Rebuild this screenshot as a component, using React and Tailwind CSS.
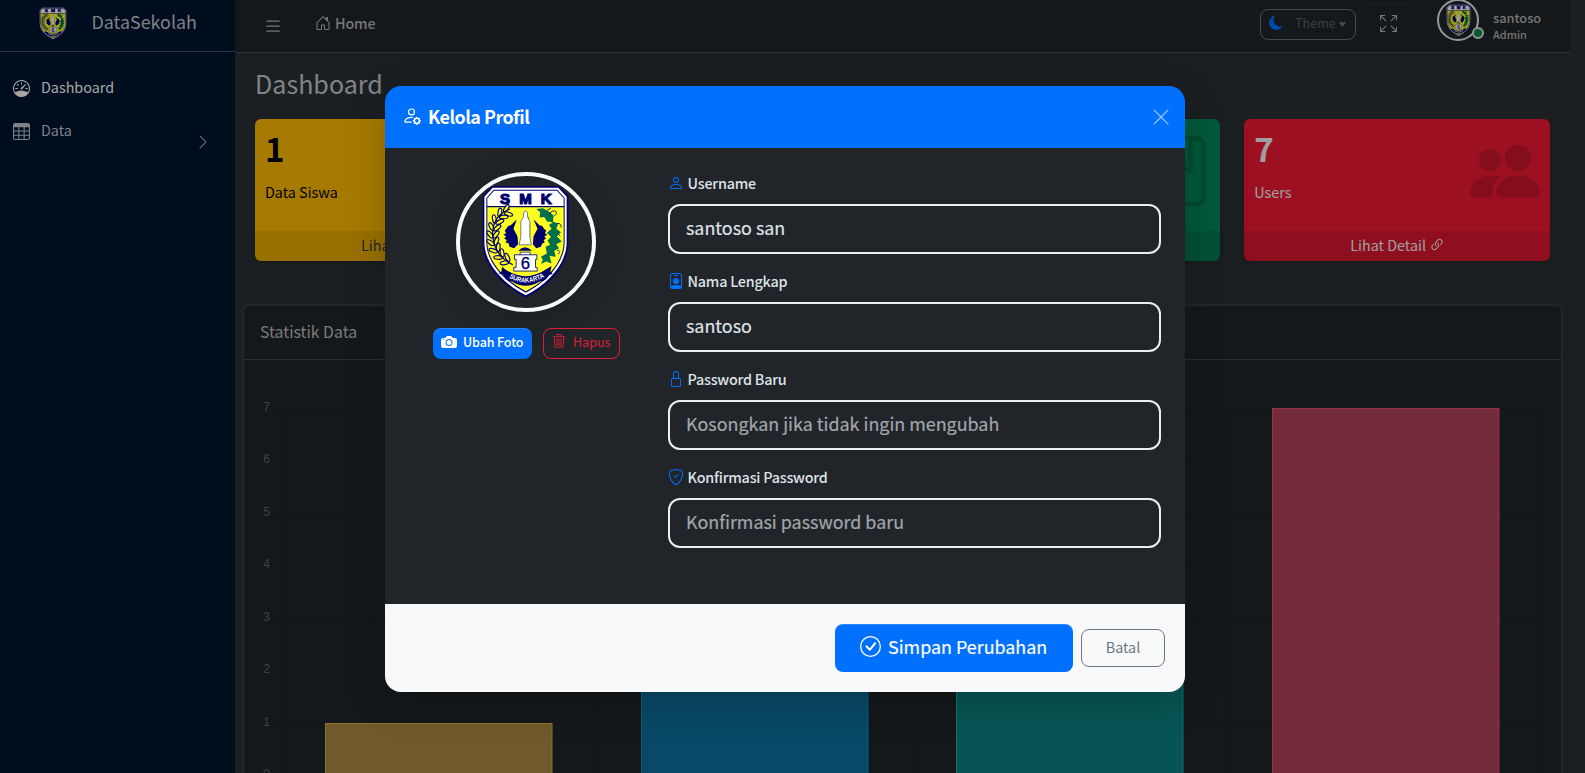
import {
  BsSpeedometer, BsTable, BsChevronRight, BsList, BsHouseDoor, BsMoonFill, BsCaretDownFill,
  BsArrowsFullscreen, BsJournalBookmark, BsPeopleFill, BsLink45Deg, BsPersonGear, BsXLg,
  BsCameraFill, BsTrash3, BsPerson, BsPersonBadge, BsLock, BsShieldCheck, BsCheckCircle,
} from "react-icons/bs";

const NAVY = "#00006b";

const leaves = [
  [140, 140, 20], [124, 152, 40], [111, 170, 62], [104, 191, 78], [101, 213, 90],
  [103, 235, 104], [111, 256, 122], [125, 274, 138], [143, 288, 152],
];

function Crest({ className, id }) {
  return (
    <svg className={className} viewBox="68 60 260 340" preserveAspectRatio="none" aria-hidden="true">
      <path d="M98 63H298L326 92V232C326 300 272 362 199 398C126 362 70 300 70 232V92Z" fill={NAVY} />
      <path d="M100 68H296L321 95V232C321 296 268 356 199 392C130 356 75 296 75 232V95Z" fill="#fff" />
      <path d="M103 74H293L315 99V232C315 292 264 350 199 384C134 350 81 292 81 232V99Z" fill={NAVY} />
      <path d="M104 77H292L312 100V123H84V100Z" fill="#fff" />
      <path d="M84 127H312V232C312 290 262 347 199 380C136 347 84 290 84 232Z" fill="#ffff21" />
      <g fontSize="45" fontWeight="700" textAnchor="middle" fill={NAVY} stroke={NAVY} strokeWidth="3.5" fontFamily="Liberation Sans, sans-serif">
        <text x="199" y="116" textLength="154" lengthAdjust="spacing">SMK</text>
      </g>
      <g fill="#ffff21" stroke={NAVY} strokeWidth="3.5">
        {leaves.map(([x, y, a]) => (
          <g key={y} transform={`translate(${x} ${y}) rotate(${180 - a})`}>
            <ellipse cx="-4" cy="-9" rx="13" ry="5.5" transform="rotate(38 -4 -9)" />
            <ellipse cx="-4" cy="9" rx="13" ry="5.5" transform="rotate(-38 -4 9)" />
          </g>
        ))}
      </g>
      <path d="M152 132C108 148 96 184 101 220C106 262 132 286 160 300" fill="none" stroke={NAVY} strokeWidth="3.5" />
      <path d="M230 132L250 130L268 140L282 152L280 170L296 176L290 192L304 202L292 214L306 230L290 238L298 250L284 258L288 276L270 274L276 296L260 290L244 298L250 284L244 276L262 266L258 246L272 240L264 228L274 216L262 204L276 192L268 180L280 172L262 170L254 156L240 158L242 142Z" fill="#00704a" />
      <path d="M270 148Q276 134 286 138T284 154M292 176Q306 174 304 188M294 206L302 214M292 256Q306 258 296 268M262 136L274 130" fill="none" stroke={NAVY} strokeWidth="2.5" />
      <path d="M172 164C158 176 152 186 148 182C142 186 142 194 136 196L140 206L132 208L140 216L134 220L142 226L138 232L148 236L150 246L164 250L176 238L174 214L162 192Z" fill={NAVY} />
      <path d="M222 164C236 176 242 186 246 182C252 186 252 194 260 196L256 206L264 208L254 216L260 220L252 226L256 232L248 236L244 246L230 250L220 238L222 214L234 192Z" fill={NAVY} />
      <path d="M206 150L212 180V238H202Z" fill="#8a8a50" />
      <path d="M192 144Q197 132 204 144V156L211 170V216L215 240H179L184 216V170L192 156Z" fill="#fff" stroke={NAVY} strokeWidth="1.5" />
      <path d="M176 258Q196 236 218 258Z" fill={NAVY} />
      <path d="M182 262H212V272H182Z" fill="#fff" stroke={NAVY} strokeWidth="2" />
      <path d="M165 270H232V284H228V308H233V319H163V308H170V284H165Z" fill="#fff" stroke={NAVY} strokeWidth="2.5" />
      <text x="198" y="313" textAnchor="middle" fontSize="50" fill={NAVY} stroke={NAVY} strokeWidth="1" fontFamily="Liberation Sans, sans-serif">6</text>
      <path d="M128 306L138 314Q198 356 262 312L276 304L272 320L280 328L268 330Q260 350 240 350Q198 376 158 350Q138 350 132 330L118 326L126 320Z" fill={NAVY} />
      <path id={id} d="M142 334Q198 374 262 332" fill="none" />
      <text fontSize="21" fontWeight="700" fill="#fff" fontFamily="Liberation Sans, sans-serif">
        <textPath href={"#" + id} startOffset="50%" textAnchor="middle" textLength="112" lengthAdjust="spacingAndGlyphs">SURAKARTA</textPath>
      </text>
    </svg>
  );
}

function Sidebar() {
  return (
    <aside className="flex h-full w-[235px] shrink-0 flex-col bg-[#001530]">
      <div className="flex h-[52px] items-start border-b border-[#4a5560] pl-[39px]">
        <Crest id="crest-brand" className="mt-[7px] h-[33px] w-[28px]" />
        <span className="ml-[24.5px] mt-[9px] text-[17.9px] leading-[25px] text-[#c3c8cd]">DataSekolah</span>
      </div>
      <nav className="flex flex-col pt-[15px] pl-[13px] text-[14.35px] text-[#c2c7d0]">
        <a className="flex h-[43px] items-center text-white">
          <BsSpeedometer className="mb-px size-[17px]" />
          <span className="ml-[11px] pb-[3px] leading-5">Dashboard</span>
        </a>
        <a className="flex h-[43px] items-center">
          <BsTable className="mb-px size-[17px]" />
          <span className="ml-[11px] pb-[3px] leading-5">Data</span>
          <BsChevronRight className="ml-auto mr-[24px] mt-[21px] size-[16px]" />
        </a>
      </nav>
    </aside>
  );
}

function Topbar() {
  return (
    <header className="mr-[15px] flex h-[53px] shrink-0 items-start border-b border-[#495057] bg-[#212529] text-[#b3b5b8]">
      <BsList className="ml-[28px] mt-4 size-5" />
      <a className="ml-[32px] flex items-center pt-[13px]">
        <BsHouseDoor className="mb-px size-4" />
        <span className="ml-[4px] text-[14.35px] font-medium leading-5 tracking-[-0.2px]">Home</span>
      </a>
      <button className="ml-auto mt-[9px] flex h-[31px] w-[96px] items-center rounded-lg border border-[#6c757d] pl-[8px] text-[12.6px] text-[#5c6369]">
        <BsMoonFill className="mb-[3px] size-[14px] text-[#0070ff]" />
        <span className="ml-[12px] pb-[3px] leading-5">Theme</span>
        <BsCaretDownFill className="mb-px ml-[2px] size-[9px] text-[#70777d]" />
      </button>
      <button className="ml-2 mt-1 flex h-[44px] w-[48px] justify-center rounded-lg border-t border-[#30353a] pt-[10px]">
        <BsArrowsFullscreen className="ml-px size-[17px]" />
      </button>
      <div className="relative -mt-px ml-[25px] size-[42px]">
        <span className="flex size-[42px] items-center justify-center rounded-full border-2 border-[#e9ecef]">
          <Crest id="crest-user" className="mt-px h-[33px] w-[25px]" />
        </span>
        <i className="absolute bottom-[2px] -right-[5px] size-3 rounded-full border-2 border-[#dee2e6] bg-[#0a8a44]" />
      </div>
      <div className="ml-[14px] flex w-[77px] flex-col pt-[9px]">
        <span className="text-[12.8px] font-medium leading-[18px]">santoso</span>
        <span className="text-[10.9px] font-medium leading-[15px]">Admin</span>
      </div>
    </header>
  );
}

function StatCard({ value, label, Icon, tone, children }) {
  return (
    <div className={"relative flex h-[142px] flex-1 flex-col overflow-hidden rounded-md shadow-[0_1px_3px_rgba(0,0,0,.25)] " + tone}>
      <div className="flex flex-1 items-start justify-between pl-[10px] pr-[10px]">
        <div className="flex flex-col pt-[9px]">
          <b className="text-[33px] leading-[41px]">{value}</b>
          <span className="mt-[13px] text-[14.35px] leading-5">{label}</span>
        </div>
        {Icon && <Icon className="mt-[17px] size-[70px] text-black/15" />}
      </div>
      <div className="flex h-[30px] items-center justify-center bg-black/[.08] pb-[3px] pl-px text-[14.35px]">{children}</div>
    </div>
  );
}

const bars = [
  { x: 81.5, v: 1, fill: "#ac8a42", line: "#d9ae4a" },
  { x: 397.5, v: 3, fill: "#0d719f", line: "#0f8fc4" },
  { x: 712.5, v: 4, fill: "#0c8181", line: "#12b0ac" },
  { x: 1028.5, v: 7, fill: "#b24259", line: "#f04a70" },
];

function StatChart() {
  const y = (v) => 48.5 + (7 - v) * 52.5;
  return (
    <svg className="h-[440px] w-[1318px] shrink-0" viewBox="0 0 1318 440">
      <g stroke="#000" strokeOpacity=".1">
        {[0, 1, 2, 3, 4, 5, 6, 7].map((v) => <line key={v} x1="29" x2="1300" y1={y(v)} y2={y(v)} />)}
        {[36.5, 352.5, 668.5, 984.5, 1299.5].map((x) => <line key={x} x1={x} x2={x} y1="48" y2="440" />)}
      </g>
      <g fill="#666" fontSize="12" fontFamily="Liberation Sans, sans-serif" textAnchor="end">
        {[0, 1, 2, 3, 4, 5, 6, 7].map((v) => <text key={v} x="26" y={y(v) + 2.3}>{v}</text>)}
      </g>
      {bars.map((b) => (
        <rect key={b.x} x={b.x} y={y(b.v)} width="226.5" height="440" fill={b.fill} stroke={b.line} strokeWidth="1" />
      ))}
    </svg>
  );
}

function Field({ Icon, label, value, placeholder }) {
  return (
    <label className="flex h-[98px] flex-col">
      <span className="flex h-[24px] items-center">
        <Icon className="size-4 text-[#0070ff]" />
        <span className="ml-[3.5px] pb-px text-[14.35px] font-medium leading-5 tracking-[-0.015em] text-[#dee2e6]">{label}</span>
      </span>
      <input
        className="mt-[9px] h-[50px] w-full rounded-xl border-2 border-[#e9efee] bg-transparent px-4 pb-[4px] text-[17.9px] text-[#dee2e6] outline-none [-webkit-text-stroke:0.2px] placeholder:text-[#a2a6aa]"
        defaultValue={value}
        placeholder={placeholder}
      />
    </label>
  );
}

function ProfileModal() {
  return (
    <div className="absolute inset-0 flex items-start justify-center bg-black/35 pt-[86px] pr-[15px]">
      <div className="flex h-[606px] w-[800px] flex-col overflow-hidden rounded-2xl bg-[#212529] shadow-[0_10px_40px_rgba(0,0,0,.2)]">
        <div className="flex h-[62px] items-center bg-[#0070ff] pl-[17px] pr-[14px] text-white">
          <BsPersonGear className="mb-[3px] size-[19px]" />
          <h5 className="ml-[7px] pb-[3px] text-[17.9px] font-bold leading-6 tracking-[-0.5px]">Kelola Profil</h5>
          <BsXLg className="ml-auto size-5 text-white/60" />
        </div>
        <div className="flex flex-1">
          <div className="flex w-[283px] flex-col items-center pt-[24px]">
            <div className="mr-[2px] flex size-[140px] items-center justify-center rounded-full border-4 border-[#f8f9fa] shadow-[0_4px_30px_rgba(0,0,0,.2)]">
              <Crest id="crest-avatar" className="mb-px h-[113px] w-[87px]" />
            </div>
            <div className="mt-4 flex gap-[11px] text-[12.5px]">
              <button className="flex h-[31px] w-[99px] items-center rounded-lg bg-[#0070ff] pl-[8px] text-white shadow-[inset_0_1px_0_rgba(255,255,255,.15)]">
                <BsCameraFill className="mb-[4px] size-[16px]" />
                <span className="ml-[6px] pb-[3px] font-medium leading-5 tracking-[-0.1px]">Ubah Foto</span>
              </button>
              <button className="flex h-[31px] w-[77px] items-center rounded-lg border border-[#dc2035] pl-[8px] text-[#dc2035]">
                <BsTrash3 className="mb-[5px] size-[14px]" />
                <span className="ml-[7px] pb-[3px] leading-5">Hapus</span>
              </button>
            </div>
          </div>
          <div className="flex w-[493px] flex-col pt-[23px]">
            <Field Icon={BsPerson} label="Username" value="santoso san" />
            <Field Icon={BsPersonBadge} label="Nama Lengkap" value="santoso" />
            <Field Icon={BsLock} label="Password Baru" placeholder="Kosongkan jika tidak ingin mengubah" />
            <Field Icon={BsShieldCheck} label="Konfirmasi Password" placeholder="Konfirmasi password baru" />
          </div>
        </div>
        <div className="flex h-[88px] items-center justify-end gap-2 bg-[#f8f9fb] pr-5">
          <button className="flex h-[48px] w-[238px] items-center rounded-lg bg-[#0070ff] pl-[25px] text-[17.9px] text-white shadow-[inset_0_1px_0_rgba(255,255,255,.15)]">
            <BsCheckCircle className="mb-[4px] size-[21px]" />
            <span className="ml-[7px] pb-[4px] leading-6 [-webkit-text-stroke:0.2px]">Simpan Perubahan</span>
          </button>
          <button className="flex h-[38px] w-[84px] items-center justify-center rounded-lg border border-[#6c757d] pb-[2px] text-[14.35px] text-[#6c757d]">Batal</button>
        </div>
      </div>
    </div>
  );
}

export default function App() {
  return (
    <div className="relative flex h-[773px] w-[1585px] overflow-hidden bg-[#2b3035] font-['Noto_Sans_CJK_SC',sans-serif]">
      <Sidebar />
      <main className="flex min-w-0 flex-1 flex-col">
        <Topbar />
        <h1 className="ml-5 mt-[13px] h-[53px] shrink-0 text-[25.1px] leading-[34px] text-[#c6cacd]">Dashboard</h1>
        <section className="ml-5 mr-[35px] flex shrink-0 gap-6">
          <StatCard value="1" label="Data Siswa" tone="bg-[#ffbc00] text-black">
            <span className="text-[#343a40]">Lihat Detail</span>
            <BsLink45Deg className="ml-[3px] size-4 text-[#343a40]" />
          </StatCard>
          <StatCard tone="bg-[#0070ff]" />
          <StatCard tone="bg-[#00875a]" Icon={BsJournalBookmark} />
          <StatCard value="7" label="Users" Icon={BsPeopleFill} tone="bg-[#f11a33] text-[#f3f3f3]">
            Lihat Detail
            <BsLink45Deg className="ml-[3px] size-4" />
          </StatCard>
        </section>
        <section className="ml-2 mr-[23px] mt-[44px] flex h-[500px] shrink-0 flex-col overflow-hidden rounded-md border border-[#3a3f45] bg-[#212529] shadow-[0_0_2px_rgba(255,255,255,.15)]">
          <h3 className="h-[54px] shrink-0 border-b border-[#3f454b] pl-4 text-[15.8px] leading-[51px] text-[#b9bdc1]">Statistik Data</h3>
          <StatChart />
        </section>
      </main>
      <ProfileModal />
    </div>
  );
}
